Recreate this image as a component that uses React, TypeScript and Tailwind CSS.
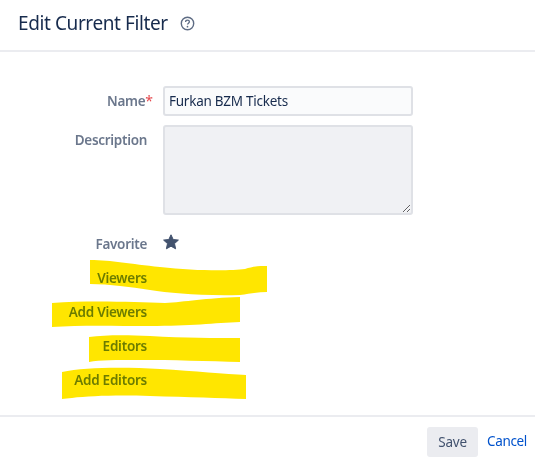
// Edit filter dialog with marker highlights over the labels
const FONT = "font-['Noto_Sans','Open_Sans',sans-serif]";

const HIGHLIGHTS = [
  "M90 260 C112 260 130 264 160 267 C195 271 230 271 245 269 C254 266 260 266 267 266 L267 292 C258 292 250 294 240 295 C200 296 170 293 150 290 C130 287 110 284 90 284 Z",
  "M52 303 C90 300 135 302 165 303 C185 302 205 298 240 297 L240 322 C215 323 190 326 150 326 C115 326 80 325 52 327 Z",
  "M89 337 C105 335 125 335 150 336 C185 338 215 338 240 338 L240 362 C210 361 170 360 140 360 C115 360 100 360 89 362 Z",
  "M62 372 C85 367 125 367 160 369 C195 371 225 374 246 375 L246 399 C220 398 190 397 150 396 C115 395 90 396 72 398 C68 398 65 399 62 399 Z",
];

function Label({ children }: { children: React.ReactNode }) {
  return <span className="text-[13.5px] font-semibold leading-5 tracking-[-0.3px] text-[#6b778c]">{children}</span>;
}

function MarkedLabel({ children }: { children: React.ReactNode }) {
  return <span className="text-[13.5px] font-semibold leading-5 tracking-[-0.25px] text-[#6c8a1a]">{children}</span>;
}

export default function App() {
  return (
    <div className={`relative h-[461px] w-[535px] overflow-hidden bg-white ${FONT}`}>
      <header className="flex h-[52px] items-center gap-3 border-b-2 border-[#ebecf0] pb-1 pl-[18px]">
        <h1 className="text-[19px] font-normal leading-6 tracking-[-0.4px] text-[#172b4d]">Edit Current Filter</h1>
        <svg width="15" height="15" viewBox="0 0 15 15" fill="none" className="text-[#5e6c84]">
          <circle cx="7.5" cy="7.5" r="6.2" stroke="currentColor" strokeWidth="1.4" />
          <path
            d="M5.6 6 C5.6 4.8 6.5 4.2 7.5 4.2 C8.6 4.2 9.4 4.9 9.4 5.8 C9.4 7.1 7.5 7.2 7.5 8.6"
            stroke="currentColor"
            strokeWidth="1.3"
          />
          <circle cx="7.5" cy="10.7" r="0.85" fill="currentColor" />
        </svg>
      </header>

      <div className="grid grid-cols-[147px_250px] gap-x-4 pt-[34px]">
        <div className="flex h-[30px] items-center justify-end">
          <Label>Name</Label>
          <span className="mr-[-6px] text-[14px] leading-5 text-[#e5484d]">*</span>
        </div>
        <input
          defaultValue="Furkan BZM Tickets"
          className="h-[30px] rounded-[3px] border-2 border-[#dfe1e6] bg-[#fafbfc] px-1 text-[13.5px] tracking-[-0.25px] text-[#172b4d] outline-none"
        />

        <div className="mt-[9px] flex justify-end pt-[5px]">
          <Label>Description</Label>
        </div>
        <textarea
          readOnly
          className="mt-[9px] block h-[90px] w-[250px] rounded-[3px] border-2 border-[#dfe1e6] bg-[#f0f1f4] outline-none"
        />

        <div className="mt-[19px] flex h-5 justify-end">
          <Label>Favorite</Label>
        </div>
        <div className="mt-[19px] flex h-5 items-start">
          <svg width="16" height="16" viewBox="0 0 16 16">
            <path
              d="M8 .8 L10.2 5.5 L15.4 6.1 L11.5 9.6 L12.6 14.8 L8 12.2 L3.4 14.8 L4.5 9.6 L.6 6.1 L5.8 5.5 Z"
              fill="#42526e"
              stroke="#42526e"
              strokeLinejoin="round"
            />
          </svg>
        </div>

        <div className="mt-[14px] flex h-5 justify-end">
          <MarkedLabel>Viewers</MarkedLabel>
        </div>
        <div />
        <div className="mt-[14px] flex h-5 justify-end">
          <MarkedLabel>Add Viewers</MarkedLabel>
        </div>
        <div />
        <div className="mt-[14px] flex h-5 justify-end">
          <MarkedLabel>Editors</MarkedLabel>
        </div>
        <div />
        <div className="mt-[14px] flex h-5 justify-end">
          <MarkedLabel>Add Editors</MarkedLabel>
        </div>
      </div>

      {/* marker strokes sit over the labels */}
      <svg width="535" height="461" viewBox="0 0 535 461" className="pointer-events-none absolute left-0 top-0 mix-blend-multiply">
        {HIGHLIGHTS.map((d) => (
          <path key={d} d={d} fill="#ffe600" />
        ))}
      </svg>

      <footer className="absolute inset-x-0 top-[415px] flex items-start justify-end gap-[9px] border-t-2 border-[#ebecf0] pr-2 pt-[10px]">
        <button className="h-[30px] w-[51px] rounded-[3px] bg-[#ebecf0] text-[13.5px] tracking-[-0.2px] text-[#42526e]">Save</button>
        <a className="mt-[4px] text-[13.5px] leading-5 tracking-[-0.35px] text-[#0052cc]">Cancel</a>
      </footer>
    </div>
  );
}
